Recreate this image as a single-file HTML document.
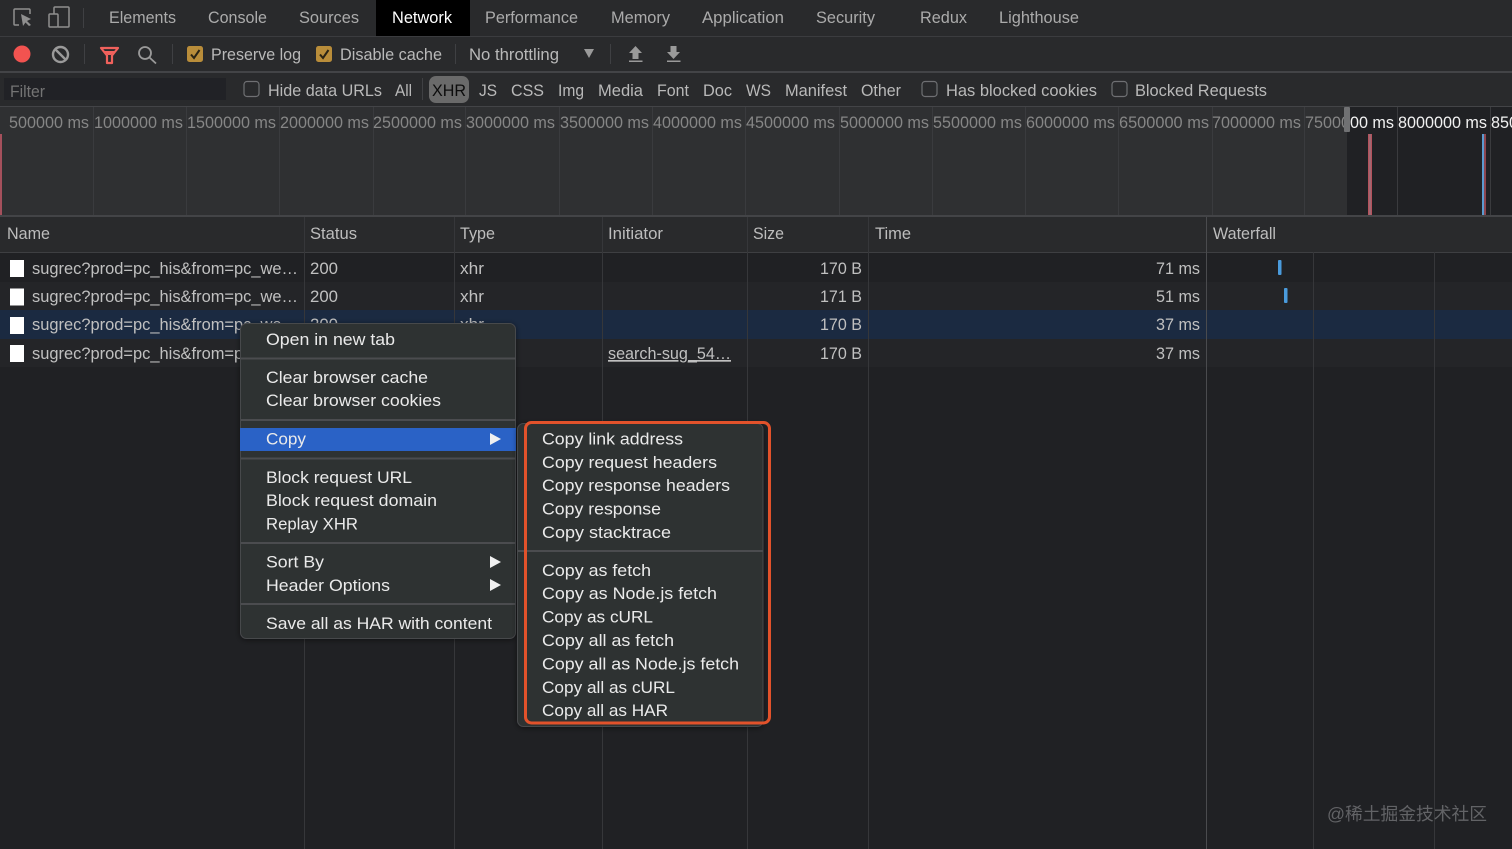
<!DOCTYPE html>
<html><head><meta charset="utf-8"><title>Network</title>
<style>
html,body{margin:0;padding:0;background:#202124;width:1512px;height:849px;overflow:hidden}
svg{display:block;filter:blur(.35px)}
text{font-family:"Liberation Sans","Noto Sans CJK SC",sans-serif;font-size:16.8px;white-space:pre}
.tab{fill:#ababab}
.tb{fill:#b9b9b9}
.tl{fill:#868686}
.hd{fill:#bdbdbd}
.cell{fill:#c0c0c0}
.m{fill:#eaeaea;font-size:18.2px}
</style></head><body>
<svg width="1512" height="849" viewBox="0 0 1512 849" xmlns="http://www.w3.org/2000/svg">
<defs>
<filter id="sh" x="-10%" y="-10%" width="120%" height="120%"><feDropShadow dx="0" dy="1" stdDeviation="3" flood-color="#000" flood-opacity=".5"/></filter>
<clipPath id="c75"><rect x="1300" y="107" width="44" height="30"/></clipPath>
<clipPath id="c80"><rect x="1350" y="107" width="162" height="30"/></clipPath>
</defs>
<!-- backgrounds -->
<rect width="1512" height="849" fill="#202124"/>
<rect width="1512" height="36" fill="#292a2c"/>
<rect y="36" width="1512" height="1" fill="#3b3c3f"/>
<rect y="37" width="1512" height="34" fill="#292a2c"/>
<rect y="71" width="1512" height="2" fill="#434447"/>
<rect y="73" width="1512" height="33" fill="#292a2c"/>
<rect y="106" width="1512" height="1" fill="#434447"/>
<rect y="107" width="1347" height="108" fill="#2f3032"/>
<rect x="1347" y="107" width="165" height="108" fill="#202124"/>
<rect y="215" width="1512" height="2" fill="#434447"/>
<rect y="217" width="1512" height="35" fill="#292a2c"/>
<rect y="252" width="1512" height="1" fill="#3e3f42"/>
<!-- rows -->
<rect y="282" width="1512" height="28" fill="#242528"/>
<rect y="310" width="1512" height="29" fill="#1b2a41"/>
<rect y="339" width="1512" height="28" fill="#242528"/>

<!-- tab bar -->
<rect x="376" y="0" width="94" height="36" fill="#000"/>
<g fill="none" stroke="#8f8f8f" stroke-width="1.5">
<path d="M19 25H15Q14 25 14 24V10Q14 9 15 9H29Q30 9 30 10V14"/>
<rect x="49" y="14" width="9" height="13" rx="1"/>
<path d="M54 14V8Q54 7 55 7H68Q69 7 69 8V26Q69 27 68 27H58"/>
</g>
<path d="M21 14L31 19L27 21L31 25L29 26L25.5 22.5L23 26Z" fill="#8f8f8f"/>
<rect x="83" y="8" width="1" height="20" fill="#3f4043"/>
<g class="tab">
<text x="109" y="23" textLength="67" lengthAdjust="spacingAndGlyphs">Elements</text>
<text x="208" y="23" textLength="59" lengthAdjust="spacingAndGlyphs">Console</text>
<text x="299" y="23" textLength="60" lengthAdjust="spacingAndGlyphs">Sources</text>
<text x="392" y="23" textLength="60" lengthAdjust="spacingAndGlyphs" style="fill:#fff">Network</text>
<text x="485" y="23" textLength="93" lengthAdjust="spacingAndGlyphs">Performance</text>
<text x="611" y="23" textLength="59" lengthAdjust="spacingAndGlyphs">Memory</text>
<text x="702" y="23" textLength="82" lengthAdjust="spacingAndGlyphs">Application</text>
<text x="816" y="23" textLength="59" lengthAdjust="spacingAndGlyphs">Security</text>
<text x="920" y="23" textLength="47" lengthAdjust="spacingAndGlyphs">Redux</text>
<text x="999" y="23" textLength="80" lengthAdjust="spacingAndGlyphs">Lighthouse</text>
</g>

<!-- toolbar -->
<circle cx="22" cy="54" r="8.5" fill="#f25350"/>
<g fill="none" stroke="#9a9a9a" stroke-width="2.4"><circle cx="60.5" cy="54.5" r="7.5"/><path d="M55 49L66 60"/></g>
<rect x="84" y="44" width="1" height="20" fill="#3f4043"/>
<path d="M101 48H118L112 55.5V63H107V55.5Z" fill="none" stroke="#f0615c" stroke-width="2.2" stroke-linejoin="round"/>
<path d="M104 51H115L111 55H108Z" fill="#f0615c"/>
<g fill="none" stroke="#9a9a9a" stroke-width="1.8"><circle cx="145" cy="53" r="6"/><path d="M149.5 57.5L156 63.5"/></g>
<rect x="172" y="44" width="1" height="20" fill="#3f4043"/>
<rect x="187" y="46" width="16" height="16" rx="2.5" fill="#b98d3a"/>
<path d="M191 54.5L194 58L199.5 50" fill="none" stroke="#2a2415" stroke-width="2"/>
<rect x="316" y="46" width="16" height="16" rx="2.5" fill="#b98d3a"/>
<path d="M320 54.5L323 58L328.5 50" fill="none" stroke="#2a2415" stroke-width="2"/>
<g class="tb">
<text x="211" y="60" textLength="90" lengthAdjust="spacingAndGlyphs">Preserve log</text>
<text x="340" y="60" textLength="102" lengthAdjust="spacingAndGlyphs">Disable cache</text>
<text x="469" y="60" textLength="90" lengthAdjust="spacingAndGlyphs">No throttling</text>
</g>
<rect x="455" y="44" width="1" height="20" fill="#3f4043"/>
<path d="M584 49H594L589 58Z" fill="#9a9a9a"/>
<rect x="610" y="44" width="1" height="20" fill="#3f4043"/>
<g fill="#9a9a9a">
<path d="M635.500 46L642 53H638.500V59H632.500V53H629Z"/><rect x="629" y="60.500" width="13.500" height="1.500"/>
<path d="M670.500 46H676.500V52H680L673.500 59L667 52H670.500Z"/><rect x="667" y="60.500" width="13.500" height="1.500"/>
</g>

<!-- filter row -->
<rect x="4" y="78" width="222" height="22" fill="#212226"/>
<text x="10" y="97" textLength="35" lengthAdjust="spacingAndGlyphs" fill="#747474">Filter</text>
<g fill="none" stroke="#6f7073" stroke-width="1.2">
<rect x="244" y="81.500" width="15" height="15" rx="3"/>
<rect x="922" y="81.500" width="15" height="15" rx="3"/>
<rect x="1112" y="81.500" width="15" height="15" rx="3"/>
</g>
<rect x="422" y="78" width="1" height="22" fill="#3f4043"/>
<rect x="429" y="76" width="40" height="27" rx="7" fill="#6a6a6a"/>
<g class="tb">
<text x="268" y="96" textLength="114" lengthAdjust="spacingAndGlyphs">Hide data URLs</text>
<text x="395" y="96" textLength="17" lengthAdjust="spacingAndGlyphs">All</text>
<text x="432" y="96" textLength="34" lengthAdjust="spacingAndGlyphs" style="fill:#0c0c0c">XHR</text>
<text x="479" y="96" textLength="18" lengthAdjust="spacingAndGlyphs">JS</text>
<text x="511" y="96" textLength="33" lengthAdjust="spacingAndGlyphs">CSS</text>
<text x="558" y="96" textLength="26" lengthAdjust="spacingAndGlyphs">Img</text>
<text x="598" y="96" textLength="45" lengthAdjust="spacingAndGlyphs">Media</text>
<text x="657" y="96" textLength="32" lengthAdjust="spacingAndGlyphs">Font</text>
<text x="703" y="96" textLength="29" lengthAdjust="spacingAndGlyphs">Doc</text>
<text x="746" y="96" textLength="25" lengthAdjust="spacingAndGlyphs">WS</text>
<text x="785" y="96" textLength="62" lengthAdjust="spacingAndGlyphs">Manifest</text>
<text x="861" y="96" textLength="40" lengthAdjust="spacingAndGlyphs">Other</text>
<text x="946" y="96" textLength="151" lengthAdjust="spacingAndGlyphs">Has blocked cookies</text>
<text x="1135" y="96" textLength="132" lengthAdjust="spacingAndGlyphs">Blocked Requests</text>
</g>

<!-- overview grid -->
<g fill="#3a3b3e">
<rect x="93" y="107" width="1" height="108"/><rect x="186" y="107" width="1" height="108"/><rect x="279" y="107" width="1" height="108"/><rect x="373" y="107" width="1" height="108"/><rect x="465" y="107" width="1" height="108"/><rect x="559" y="107" width="1" height="108"/><rect x="652" y="107" width="1" height="108"/><rect x="745" y="107" width="1" height="108"/><rect x="839" y="107" width="1" height="108"/><rect x="932" y="107" width="1" height="108"/><rect x="1025" y="107" width="1" height="108"/><rect x="1118" y="107" width="1" height="108"/><rect x="1212" y="107" width="1" height="108"/><rect x="1304" y="107" width="1" height="108"/><rect x="1397" y="107" width="1" height="108"/><rect x="1490" y="107" width="1" height="108"/>
</g>
<g class="tl">
<text x="9" y="128" textLength="80" lengthAdjust="spacingAndGlyphs">500000 ms</text>
<text x="94" y="128" textLength="89" lengthAdjust="spacingAndGlyphs">1000000 ms</text>
<text x="187" y="128" textLength="89" lengthAdjust="spacingAndGlyphs">1500000 ms</text>
<text x="280" y="128" textLength="89" lengthAdjust="spacingAndGlyphs">2000000 ms</text>
<text x="373" y="128" textLength="89" lengthAdjust="spacingAndGlyphs">2500000 ms</text>
<text x="466" y="128" textLength="89" lengthAdjust="spacingAndGlyphs">3000000 ms</text>
<text x="560" y="128" textLength="89" lengthAdjust="spacingAndGlyphs">3500000 ms</text>
<text x="653" y="128" textLength="89" lengthAdjust="spacingAndGlyphs">4000000 ms</text>
<text x="746" y="128" textLength="89" lengthAdjust="spacingAndGlyphs">4500000 ms</text>
<text x="840" y="128" textLength="89" lengthAdjust="spacingAndGlyphs">5000000 ms</text>
<text x="933" y="128" textLength="89" lengthAdjust="spacingAndGlyphs">5500000 ms</text>
<text x="1026" y="128" textLength="89" lengthAdjust="spacingAndGlyphs">6000000 ms</text>
<text x="1119" y="128" textLength="90" lengthAdjust="spacingAndGlyphs">6500000 ms</text>
<text x="1212" y="128" textLength="89" lengthAdjust="spacingAndGlyphs">7000000 ms</text>
<g clip-path="url(#c75)"><text x="1305" y="128" textLength="89" lengthAdjust="spacingAndGlyphs">7500000 ms</text></g>
</g>
<g fill="#f2f2f2" clip-path="url(#c80)">
<text x="1305" y="128" textLength="89" lengthAdjust="spacingAndGlyphs">7500000 ms</text>
<text x="1398" y="128" textLength="89" lengthAdjust="spacingAndGlyphs">8000000 ms</text>
<text x="1491" y="128" textLength="89" lengthAdjust="spacingAndGlyphs">8500000 ms</text>
</g>
<rect x="1344" y="107" width="6" height="25" rx="1" fill="#707173"/>
<rect x="0" y="134" width="2" height="81" fill="#a5505c"/>
<rect x="1368" y="134" width="4" height="81" fill="#b4525c"/>
<rect x="1369.500" y="134" width="1" height="81" fill="#8e7f88"/>
<rect x="1482" y="134" width="2" height="81" fill="#5b9bd0"/>
<rect x="1484" y="134" width="2" height="81" fill="#8c4650"/>

<!-- column lines -->
<g fill="#36373a">
<rect x="304" y="217" width="1" height="632"/><rect x="454" y="217" width="1" height="632"/><rect x="602" y="217" width="1" height="632"/><rect x="747" y="217" width="1" height="632"/><rect x="868" y="217" width="1" height="632"/>
<rect x="1206" y="217" width="1" height="632" fill="#4a4b4e"/>
<rect x="1313" y="252" width="1" height="597"/><rect x="1434" y="252" width="1" height="597"/>
</g>

<!-- header -->
<g class="hd">
<text x="7" y="239" textLength="43" lengthAdjust="spacingAndGlyphs">Name</text>
<text x="310" y="239" textLength="47" lengthAdjust="spacingAndGlyphs">Status</text>
<text x="460" y="239" textLength="35" lengthAdjust="spacingAndGlyphs">Type</text>
<text x="608" y="239" textLength="55" lengthAdjust="spacingAndGlyphs">Initiator</text>
<text x="753" y="239" textLength="31" lengthAdjust="spacingAndGlyphs">Size</text>
<text x="875" y="239" textLength="36" lengthAdjust="spacingAndGlyphs">Time</text>
<text x="1213" y="239" textLength="63" lengthAdjust="spacingAndGlyphs">Waterfall</text>
</g>

<!-- rows content -->
<g fill="#fff">
<rect x="10" y="260" width="14" height="17"/><rect x="10" y="288.500" width="14" height="17"/><rect x="10" y="317" width="14" height="17"/><rect x="10" y="345" width="14" height="17"/>
</g>
<g class="cell">
<text x="32" y="274" textLength="266" lengthAdjust="spacingAndGlyphs">sugrec?prod=pc_his&amp;from=pc_we…</text>
<text x="32" y="302" textLength="266" lengthAdjust="spacingAndGlyphs">sugrec?prod=pc_his&amp;from=pc_we…</text>
<text x="32" y="330" textLength="266" lengthAdjust="spacingAndGlyphs">sugrec?prod=pc_his&amp;from=pc_we…</text>
<text x="32" y="359" textLength="266" lengthAdjust="spacingAndGlyphs">sugrec?prod=pc_his&amp;from=pc_we…</text>
<text x="310" y="274" textLength="28" lengthAdjust="spacingAndGlyphs">200</text>
<text x="310" y="302" textLength="28" lengthAdjust="spacingAndGlyphs">200</text>
<text x="310" y="330" textLength="28" lengthAdjust="spacingAndGlyphs">200</text>
<text x="460" y="274" textLength="24" lengthAdjust="spacingAndGlyphs">xhr</text>
<text x="460" y="302" textLength="24" lengthAdjust="spacingAndGlyphs">xhr</text>
<text x="460" y="330" textLength="24" lengthAdjust="spacingAndGlyphs">xhr</text>
<text x="608" y="359" textLength="123" lengthAdjust="spacingAndGlyphs" text-decoration="underline">search-sug_54…</text>
<text x="820" y="274" textLength="42" lengthAdjust="spacingAndGlyphs">170 B</text>
<text x="820" y="302" textLength="42" lengthAdjust="spacingAndGlyphs">171 B</text>
<text x="820" y="330" textLength="42" lengthAdjust="spacingAndGlyphs">170 B</text>
<text x="820" y="359" textLength="42" lengthAdjust="spacingAndGlyphs">170 B</text>
<text x="1156" y="274" textLength="44" lengthAdjust="spacingAndGlyphs">71 ms</text>
<text x="1156" y="302" textLength="44" lengthAdjust="spacingAndGlyphs">51 ms</text>
<text x="1156" y="330" textLength="44" lengthAdjust="spacingAndGlyphs">37 ms</text>
<text x="1156" y="359" textLength="44" lengthAdjust="spacingAndGlyphs">37 ms</text>
</g>
<rect x="1278" y="260" width="3.500" height="15" rx="1" fill="#4a9bdc"/>
<rect x="1284" y="288" width="3.500" height="15" rx="1" fill="#4a9bdc"/>

<!-- watermark -->
<text x="1327" y="820" fill="#626366" style="font-size:17.8px" textLength="160" lengthAdjust="spacingAndGlyphs">@稀土掘金技术社区</text>

<!-- context menu -->
<rect x="240.500" y="323.500" width="275" height="315" rx="6" fill="#2f3032" stroke="#47484b" stroke-width="1" filter="url(#sh)"/>
<g fill="#4b4c4f">
<rect x="241" y="357.500" width="275" height="2"/><rect x="241" y="419" width="275" height="2"/><rect x="241" y="457.500" width="275" height="2"/><rect x="241" y="542" width="275" height="2"/><rect x="241" y="603" width="275" height="2"/>
</g>
<rect x="240" y="428" width="276" height="23" fill="#2a62c6"/>
<g class="m">
<text x="266" y="345" textLength="129" lengthAdjust="spacingAndGlyphs">Open in new tab</text>
<text x="266" y="383" textLength="162" lengthAdjust="spacingAndGlyphs">Clear browser cache</text>
<text x="266" y="406" textLength="175" lengthAdjust="spacingAndGlyphs">Clear browser cookies</text>
<text x="266" y="444.500" textLength="40" lengthAdjust="spacingAndGlyphs">Copy</text>
<text x="266" y="483" textLength="146" lengthAdjust="spacingAndGlyphs">Block request URL</text>
<text x="266" y="506" textLength="171" lengthAdjust="spacingAndGlyphs">Block request domain</text>
<text x="266" y="529.500" textLength="92" lengthAdjust="spacingAndGlyphs">Replay XHR</text>
<text x="266" y="567.500" textLength="58" lengthAdjust="spacingAndGlyphs">Sort By</text>
<text x="266" y="591" textLength="124" lengthAdjust="spacingAndGlyphs">Header Options</text>
<text x="266" y="629" textLength="226" lengthAdjust="spacingAndGlyphs">Save all as HAR with content</text>
</g>
<g fill="#f0f0f0">
<path d="M490 433L501 439L490 445Z"/><path d="M490 556L501 562L490 568Z"/><path d="M490 579L501 585L490 591Z"/>
</g>

<!-- submenu -->
<rect x="517.500" y="423.500" width="245.500" height="303" rx="6" fill="#2f3032" stroke="#47484b" stroke-width="1" filter="url(#sh)"/>
<rect x="518" y="550" width="245" height="2" fill="#4b4c4f"/>
<g class="m">
<text x="542" y="444.500" textLength="141" lengthAdjust="spacingAndGlyphs">Copy link address</text>
<text x="542" y="468" textLength="175" lengthAdjust="spacingAndGlyphs">Copy request headers</text>
<text x="542" y="491" textLength="188" lengthAdjust="spacingAndGlyphs">Copy response headers</text>
<text x="542" y="514.500" textLength="119" lengthAdjust="spacingAndGlyphs">Copy response</text>
<text x="542" y="538" textLength="129" lengthAdjust="spacingAndGlyphs">Copy stacktrace</text>
<text x="542" y="576" textLength="109" lengthAdjust="spacingAndGlyphs">Copy as fetch</text>
<text x="542" y="599" textLength="175" lengthAdjust="spacingAndGlyphs">Copy as Node.js fetch</text>
<text x="542" y="622.500" textLength="111" lengthAdjust="spacingAndGlyphs">Copy as cURL</text>
<text x="542" y="646" textLength="132" lengthAdjust="spacingAndGlyphs">Copy all as fetch</text>
<text x="542" y="669.500" textLength="197" lengthAdjust="spacingAndGlyphs">Copy all as Node.js fetch</text>
<text x="542" y="693" textLength="133" lengthAdjust="spacingAndGlyphs">Copy all as cURL</text>
<text x="542" y="716" textLength="126" lengthAdjust="spacingAndGlyphs">Copy all as HAR</text>
</g>
<rect x="525.500" y="422.500" width="244" height="300.500" rx="6" fill="none" stroke="#e2522b" stroke-width="3"/>
</svg>
</body></html>
